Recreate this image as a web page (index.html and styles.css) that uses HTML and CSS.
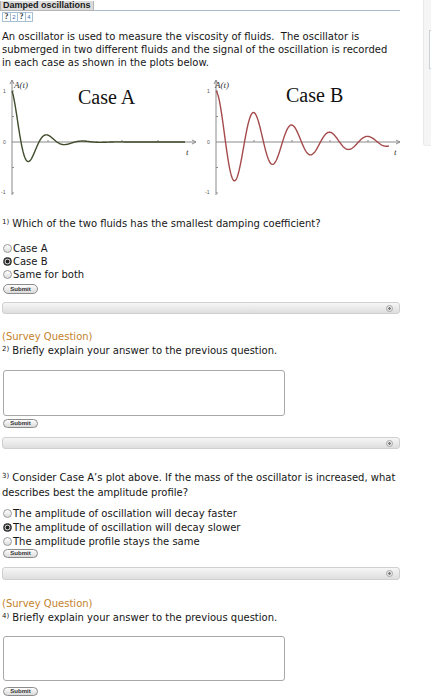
FILE: index.html
```
<!DOCTYPE html>
<html lang="en">
<head>
    <meta charset="UTF-8">
    <meta name="viewport" content="width=device-width, initial-scale=1.0">
    <title>Damped oscillations</title>
    <link rel="stylesheet" href="styles.css">
</head>
<body>
    <div class="page">
        <div class="main">
            <div class="title-row">
                <span class="title-tab">Damped oscillations</span>
                <span class="title-rule"></span>
            </div>
            <div class="part-nav">
                <span class="part q">?</span><span class="part">2</span><span class="part q">?</span><span class="part">4</span>
            </div>

            <p class="intro">An oscillator is used to measure the viscosity of fluids.&nbsp; The oscillator is<br>submerged in two different fluids and the signal of the oscillation is recorded<br>in each case as shown in the plots below.</p>

            <div class="plots">
                <svg class="plot" width="200" height="130" viewBox="0 0 200 130">
                    <g class="axes">
                        <path d="M12 125 V10 M10 14 L12 10 L14 14"/>
                        <path d="M12 72 H196 M192 70 L196 72 L192 74"/>
                        <path d="M12 21 h2 M12 46.5 h2 M12 97.5 h2 M12 123 h2 M48 72 v-2 M85 72 v-2 M122 72 v-2 M158 72 v-2"/>
                    </g>
                    <text class="tick" x="3" y="23">1</text>
                    <text class="tick" x="3" y="74">0</text>
                    <text class="tick" x="1" y="124">-1</text>
                    <text class="axis-name" x="14" y="18">A(t)</text>
                    <text class="axis-name" x="186" y="85">t</text>
                    <text class="case" x="78" y="34">Case A</text>
                    <path id="curve-a" class="curve curve-a"/>
                </svg>
                <svg class="plot" width="200" height="130" viewBox="0 0 200 130">
                    <g class="axes">
                        <path d="M12 125 V10 M10 14 L12 10 L14 14"/>
                        <path d="M12 72 H196 M192 70 L196 72 L192 74"/>
                        <path d="M12 21 h2 M12 46.5 h2 M12 97.5 h2 M12 123 h2 M50 72 v-2 M88 72 v-2 M126 72 v-2 M164 72 v-2"/>
                    </g>
                    <text class="tick" x="3" y="23">1</text>
                    <text class="tick" x="3" y="74">0</text>
                    <text class="tick" x="1" y="124">-1</text>
                    <text class="axis-name" x="11" y="18">A(t)</text>
                    <text class="axis-name" x="190" y="85">t</text>
                    <text class="case" x="82" y="32">Case B</text>
                    <path id="curve-b" class="curve curve-b"/>
                </svg>
            </div>

            <div class="question q-first">
                <p class="prompt"><span class="num">1)</span> Which of the two fluids has the smallest damping coefficient?</p>
                <div class="choices">
                    <div class="choice"><span class="radio"></span>Case A</div>
                    <div class="choice"><span class="radio checked"></span>Case B</div>
                    <div class="choice"><span class="radio"></span>Same for both</div>
                </div>
                <button class="submit">Submit</button>
                <div class="answer-bar"><span class="bar-icon"></span></div>
            </div>

            <div class="question q-survey">
                <p class="survey">(Survey Question)</p>
                <p class="prompt"><span class="num">2)</span> Briefly explain your answer to the previous question.</p>
                <div class="textbox"></div>
                <button class="submit">Submit</button>
                <div class="answer-bar"><span class="bar-icon"></span></div>
            </div>

            <div class="question q-wide">
                <p class="prompt"><span class="num">3)</span> Consider Case A’s plot above. If the mass of the oscillator is increased, what describes best the amplitude profile?</p>
                <div class="choices">
                    <div class="choice"><span class="radio"></span>The amplitude of oscillation will decay faster</div>
                    <div class="choice"><span class="radio checked"></span>The amplitude of oscillation will decay slower</div>
                    <div class="choice"><span class="radio"></span>The amplitude profile stays the same</div>
                </div>
                <button class="submit">Submit</button>
                <div class="answer-bar"><span class="bar-icon"></span></div>
            </div>

            <div class="question q-survey q-last">
                <p class="survey">(Survey Question)</p>
                <p class="prompt"><span class="num">4)</span> Briefly explain your answer to the previous question.</p>
                <div class="textbox"></div>
                <button class="submit">Submit</button>
            </div>
        </div>
        <div class="side">
            <div class="side-box"></div>
        </div>
    </div>

    <script>
        // damped cosine A(t) = e^(-b s) cos(w s), 51px per unit, zero line at y=72
        function drawDamped(id, b, w, x0, x1) {
            let d = '';
            for (let x = x0; x <= x1; x += 0.5) {
                const s = x - x0;
                const y = 72 - 51 * Math.exp(-b * s) * Math.cos(w * s);
                d += (x === x0 ? 'M' : 'L') + x + ' ' + y.toFixed(2) + ' ';
            }
            document.getElementById(id).setAttribute('d', d);
        }

        drawDamped('curve-a', 0.056, 2 * Math.PI / 36, 12, 185);
        drawDamped('curve-b', 0.0145, 2 * Math.PI / 38, 12, 185);
    </script>
</body>
</html>
```
FILE: styles.css
```
body {
    margin: 0;
    font-family: "DejaVu Sans", Verdana, sans-serif;
    font-size: 10px;
    line-height: 13px;
    color: #161616;
    background: #fff;
}
p { margin: 0; }

.page {
    display: flex;
    align-items: flex-start;
}
.main {
    width: 423px;
}
.side {
    width: 8px;
    height: 146px;
    background: #f5f5f5;
    border-left: 1px solid #e8e8e8;
    border-bottom: 1px solid #ececec;
    border-bottom-left-radius: 3px;
    padding-top: 30px;
    box-sizing: border-box;
}
.side-box {
    margin-left: 5px;
    height: 37px;
    border: 1px solid #c8d0d8;
    border-right: none;
    background: #fff;
}

/* title tab with rule */
.title-row {
    display: flex;
    align-items: flex-end;
    width: 400px;
    height: 11px;
}
.title-tab {
    height: 10px;
    box-sizing: border-box;
    padding: 0 2px;
    background: #dcdcdc;
    border: 1px solid #b4b4b4;
    border-top: none;
    font-family: "Liberation Sans", Arial, sans-serif;
    font-weight: bold;
    font-size: 9px;
    line-height: 8px;
    color: #1a1a1a;
    white-space: nowrap;
}
.title-rule {
    flex: 1;
    border-bottom: 1px solid #a9bccd;
}

.part-nav {
    display: flex;
    margin: 1px 0 0 2px;
}
.part {
    width: 8px;
    height: 10px;
    box-sizing: border-box;
    border: 1px solid #a8c0d4;
    margin-right: -1px;
    font-family: "Liberation Sans", Arial, sans-serif;
    font-size: 6px;
    line-height: 8px;
    text-align: center;
    color: #3a6fb0;
}
.part.q {
    width: 9px;
    color: #333;
    font-weight: bold;
    font-family: "Liberation Serif", serif;
    font-size: 8px;
}

.intro {
    margin: 8px 0 0 2px;
}

/* plots */
.plots {
    display: flex;
    gap: 4px;
    height: 130px;
    margin-top: 1px;
}
.plot { display: block; }
.axes path {
    fill: none;
    stroke: #8a8a8a;
    stroke-width: 1;
}
.tick {
    font-family: "Liberation Sans", Arial, sans-serif;
    font-size: 5px;
    fill: #555;
}
.axis-name {
    font-family: "Liberation Serif", serif;
    font-style: italic;
    font-size: 9px;
    fill: #333;
}
.case {
    font-family: "Liberation Serif", serif;
    font-size: 20px;
    fill: #111;
}
.curve {
    fill: none;
    stroke-width: 1.4;
}
.curve-a { stroke: #3f4b2a; }
.curve-b { stroke: #a44a4b; }

/* questions */
.question {
    margin-left: 2px;
}
.prompt {
    width: 398px;
}
.num {
    font-size: 7px;
    vertical-align: 3px;
    line-height: 7px;
}
.survey {
    color: #c4832c;
}
.choice {
    display: flex;
    align-items: center;
}
.radio {
    width: 9px;
    height: 9px;
    box-sizing: border-box;
    border: 1px solid #9a9a9a;
    border-radius: 50%;
    background: linear-gradient(#fff, #dcdcdc);
    margin: 0 1px 0 1px;
}
.radio.checked {
    border-color: #333;
    background: radial-gradient(circle, #222 0 1.6px, #c8c8c8 2.2px 2.6px, #3a3a3a 3.2px);
}

.submit {
    display: block;
    width: 35px;
    height: 9px;
    padding: 0;
    margin-left: 1px;
    border: 1px solid #8c8c8c;
    border-radius: 5px;
    background: linear-gradient(#fdfdfd, #dadada);
    font-family: "Liberation Sans", Arial, sans-serif;
    font-weight: bold;
    font-size: 6px;
    line-height: 7px;
    color: #333;
}

.answer-bar {
    width: 398px;
    height: 12px;
    box-sizing: border-box;
    margin-top: 9px;
    border: 1px solid #d0d0d0;
    border-radius: 3px;
    background: linear-gradient(#f6f6f6, #dedede);
    display: flex;
    align-items: center;
    justify-content: flex-end;
    padding-right: 6px;
}
.bar-icon {
    width: 7px;
    height: 7px;
    box-sizing: border-box;
    border-radius: 50%;
    border: 1px solid #a8a8a8;
    background: radial-gradient(circle, #777 0 1px, #e8e8e8 1.5px);
}

.textbox {
    width: 282px;
    height: 46px;
    box-sizing: border-box;
    margin: 12px 0 0 1px;
    border: 1px solid #a8a8a8;
    border-radius: 3px;
    background: #fff;
}
.textbox + .submit {
    margin-top: 3px;
}

/* per-question spacing */
.q-first {
    margin-top: 17px;
}
.q-first .choices { margin-top: 12px; }
.q-first .submit { height: 10px; margin-top: 3px; }
.q-first .answer-bar { margin-top: 8px; }

.q-survey {
    margin-top: 16px;
    line-height: 14px;
}

.q-wide {
    margin-top: 22px;
}
.q-wide .prompt { line-height: 14.5px; }
.q-wide .choices {
    margin-top: 6.5px;
    line-height: 14px;
}
.q-wide .submit { margin-top: 0.5px; }
.q-wide .answer-bar { height: 13px; }

.q-last {
    margin-top: 17px;
}
.q-last .textbox {
    height: 45px;
    margin-top: 11px;
}
.q-last .textbox + .submit {
    margin-top: 6px;
}
```
